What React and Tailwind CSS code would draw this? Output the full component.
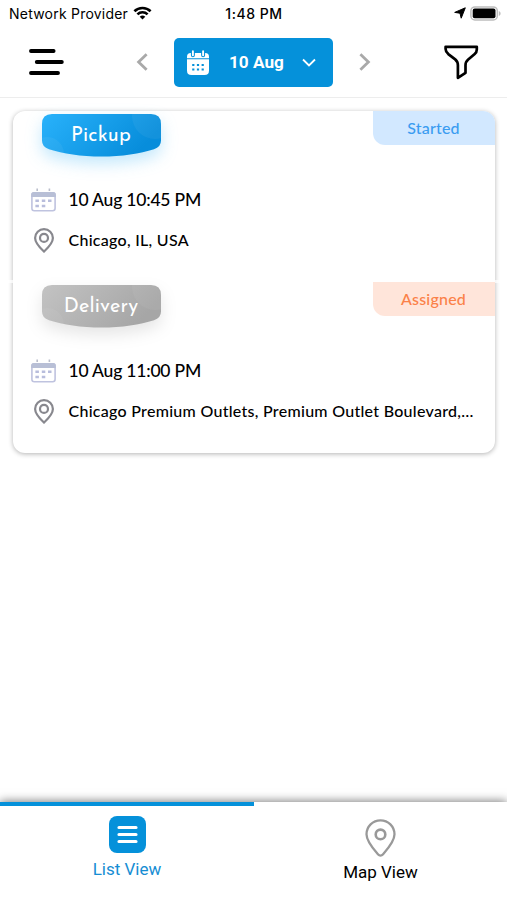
import React, { useState } from 'react';

const WifiIcon = () => (
  <svg className="h-[14px] w-[19px]" viewBox="0 0 19 14" fill="none" stroke="#000" strokeWidth="2.6">
    <path d="M1.4 5.3a11.6 11.6 0 0 1 16.2 0" />
    <path d="M4.4 8.4a7.3 7.3 0 0 1 10.2 0" />
    <path d="M9.5 13.6 6.7 10.8a4 4 0 0 1 5.6 0Z" fill="#000" stroke="none" />
  </svg>
);

const LocationArrowIcon = () => (
  <svg className="h-[12px] w-[12px]" viewBox="0 0 12 12" fill="#000">
    <path d="M11.3.8 7.2 11.2 6 6.2.7 5.4Z" stroke="#000" strokeWidth="1" strokeLinejoin="round" />
  </svg>
);

const BatteryIcon = () => (
  <svg className="h-[15px] w-[31px]" viewBox="0 0 31 15">
    <rect x=".9" y=".9" width="26.4" height="13" rx="4" fill="#fff" stroke="#bdbdbd" strokeWidth="1.5" />
    <rect x="2.7" y="2.6" width="22.8" height="9.7" rx="2" fill="#000" />
    <path d="M28.8 5v5c1.2-.5 1.8-1.4 1.8-2.5S30 5.5 28.8 5Z" fill="#bdbdbd" />
  </svg>
);

const MenuIcon = () => (
  <svg className="h-[26px] w-[35px]" viewBox="0 0 35 26" stroke="#000" strokeWidth="3.9" strokeLinecap="round">
    <path d="M2 2h22.6M7.8 13h25M2 24h27" />
  </svg>
);

const ChevronIcon = ({ flip }) => (
  <svg className={`h-[18px] w-[12px] ${flip ? 'rotate-180' : ''}`} viewBox="0 0 12 18" fill="none" stroke="#a9a9a9" strokeWidth="2.8">
    <path d="m10.6 1.2-8 7.8 8 7.8" />
  </svg>
);

const HeaderCalendarIcon = () => (
  <svg className="h-[26px] w-[24px]" viewBox="0 0 24 26">
    <path d="M1 8.3V6.7Q1 3 4.7 3h14.6Q23 3 23 6.7v1.6Z" fill="#fff" />
    <path d="M1 9.3h22v11.1Q23 25 18.5 25h-13Q1 25 1 20.4Z" fill="#fff" />
    <path d="M6.9 1.3v4M17.1 1.3v4" stroke="#0591da" strokeWidth="4" strokeLinecap="round" />
    <path d="M6.9 1.3v4M17.1 1.3v4" stroke="#fff" strokeWidth="1.9" strokeLinecap="round" />
    <path d="M6.2 15h2.2M10.9 15h2.2M15.6 15h2.2M6.2 19.5h2.2M10.9 19.5h2.2M15.6 19.5h2.2" stroke="#0591da" strokeWidth="2" />
  </svg>
);

const FilterIcon = () => (
  <svg className="h-[35px] w-[35px]" viewBox="0 0 35 35" fill="none" stroke="#000" strokeWidth="2.7" strokeLinejoin="round">
    <path d="M1.6 1.8h31.2v2.8c0 1.8-.7 3.3-2.1 4.5l-6.5 5.4c-1.9 1.6-2.7 3.5-2.7 5.8v7.5l-7.6 5V20.3c0-2.4-.8-4.3-2.7-5.9L4.3 9.1C2.5 7.5 1.6 6 1.6 4Z" />
  </svg>
);

const CalendarIcon = () => (
  <svg className="h-[24px] w-[25px] shrink-0" viewBox="0 0 25 24">
    <rect x=".9" y="4.7" width="23.2" height="18" rx="2.5" fill="#fff" stroke="#bfc3df" strokeWidth="1.6" />
    <path d="M.2 9V6.5Q.2 4 2.8 4h19.4q2.6 0 2.6 2.5V9Z" fill="#b8bfd6" />
    <path d="M6.2.5v2.4M18.4.5v2.4" stroke="#b9bdcb" strokeWidth="1.6" />
    <path d="M4.4 12.7h3.5M10.8 12.7h3.5M17 12.7h3.5M4.4 17.9h3.5M10.8 17.9h3.5" stroke="#b8bddc" strokeWidth="2.5" />
  </svg>
);

const PinIcon = () => (
  <svg className="ml-[3px] mr-[2px] h-[25px] w-[20px] shrink-0" viewBox="0 0 20 25" fill="none" stroke="#88888e" strokeWidth="2.2">
    <path d="M10 23.6C6.8 20.6 1.1 15.3 1.1 10a8.9 8.9 0 0 1 17.8 0c0 5.3-5.7 10.6-8.9 13.6Z" strokeLinejoin="round" />
    <circle cx="10" cy="9.9" r="4" />
  </svg>
);

const MapPinIcon = () => (
  <svg className="h-[38px] w-[31px]" viewBox="0 0 31 38" fill="none" stroke="#999" strokeWidth="2.3">
    <path d="M13.2 35.5C8.5 30.2 1.5 22.7 1.5 15.3a14 14 0 0 1 28 0c0 7.400-7 14.900-11.700 20.200a3 3 0 0 1-4.600 0Z" />
    <circle cx="15.5" cy="15.4" r="4.8" strokeWidth="2.6" />
  </svg>
);

const ribbonPath =
  'M10 0h99q10 0 10 10v16.5q0 6.5-7 8.7C98 39.7 80 42.5 59.5 42.5S21 39.7 7 35.2Q0 33 0 26.5V10Q0 0 10 0Z';

const Ribbon = ({ id, label, from, to, shadow }) => (
  <div className="relative ml-[29px] mt-[3px] h-[43px] w-[119px]">
    <svg className={`absolute inset-0 h-full w-full overflow-visible ${shadow}`} viewBox="0 0 119 43">
      <defs>
        <linearGradient id={id} x1="0" y1="0" x2="1" y2=".35">
          <stop offset="0" stopColor={from} />
          <stop offset="1" stopColor={to} />
        </linearGradient>
        <clipPath id={`${id}-clip`}>
          <path d={ribbonPath} />
        </clipPath>
      </defs>
      <path d={ribbonPath} fill={`url(#${id})`} />
      <g clipPath={`url(#${id}-clip)`} fill="#fff" fillOpacity=".05">
        <circle cx="113" cy="2" r="23" />
        <circle cx="5" cy="40" r="17" />
      </g>
    </svg>
    <span className="relative block pt-[2px] text-center font-['Josefin_Sans',Lato,sans-serif] text-[20px] leading-[41px] tracking-[0.2px] text-white">
      {label}
    </span>
  </div>
);

const stops = [
  {
    id: 'pickup',
    label: 'Pickup',
    from: '#29b2fb',
    to: '#078ddb',
    shadow: 'drop-shadow-[0_7px_8px_rgba(41,171,245,0.28)]',
    status: 'Started',
    statusClass: 'bg-[#d2e8ff] text-[#3a9cf1] rounded-tr-[12px]',
    time: '10 Aug 10:45 PM',
    place: 'Chicago, IL, USA',
  },
  {
    id: 'delivery',
    label: 'Delivery',
    from: '#c3c3c3',
    to: '#a6a6a6',
    shadow: 'drop-shadow-[0_7px_8px_rgba(0,0,0,0.1)]',
    status: 'Assigned',
    statusClass: 'bg-[#ffe5da] text-[#fb8148]',
    time: '10 Aug 11:00 PM',
    place: 'Chicago Premium Outlets, Premium Outlet Boulevard,…',
  },
];

const StopSection = ({ stop }) => (
  <section className="h-[171px]">
    <div className="flex items-start justify-between">
      <Ribbon {...stop} />
      <div
        className={`h-[34px] w-[122px] rounded-bl-[12px] text-center text-[16px] font-medium leading-[33px] tracking-[0.2px] ${stop.statusClass}`}
      >
        {stop.status}
      </div>
    </div>
    <div className="mt-[31px] flex h-[24px] items-center gap-3 pl-[18px]">
      <CalendarIcon />
      <span className="whitespace-nowrap pl-px text-[17.5px] font-medium tracking-[-0.2px]">{stop.time}</span>
    </div>
    <div className="mt-4 flex h-[25px] items-center gap-3 pl-[18px]">
      <PinIcon />
      <span className="whitespace-nowrap pb-[2px] pl-px text-[16px] font-medium tracking-[0.28px]">{stop.place}</span>
    </div>
  </section>
);

const App = () => {
  const [tab, setTab] = useState('list');

  return (
    <div className="flex h-[900px] w-[507px] flex-col overflow-hidden bg-white font-[Lato,sans-serif] text-black">
      {/* Status bar */}
      <div className="grid h-[28px] grid-cols-3 items-center pb-[2px] pl-[9px] pr-[6px] font-[Inter,sans-serif] text-[14px]">
        <div className="flex items-center gap-[5px]">
          <span className="whitespace-nowrap tracking-[0.22px]">Network Provider</span>
          <WifiIcon />
        </div>
        <span className="pr-[2px] text-center font-medium tracking-[0.55px]">1:48 PM</span>
        <div className="flex items-center justify-end gap-1">
          <LocationArrowIcon />
          <BatteryIcon />
        </div>
      </div>

      {/* Header */}
      <header className="flex h-[70px] items-center justify-between border-b border-[#ededed] pl-[29px] pr-[28px]">
        <button className="pb-[2px]"><MenuIcon /></button>
        <div className="flex items-center gap-[26px] pr-px">
          <button className="pb-px"><ChevronIcon /></button>
          <button className="flex h-[49px] w-[159px] items-center rounded-[5px] bg-[#0591da] pl-3 text-white">
            <HeaderCalendarIcon />
            <span className="ml-[19px] font-[Roboto,sans-serif] text-[17.2px] font-bold">10 Aug</span>
            <svg className="ml-[18px] h-[9px] w-[14px]" viewBox="0 0 14 9" fill="none" stroke="#fff" strokeWidth="1.8">
              <path d="m1 1.5 6 6 6-6" />
            </svg>
          </button>
          <button className="pb-px"><ChevronIcon flip /></button>
        </div>
        <button><FilterIcon /></button>
      </header>

      {/* Order card, the side shadow breaks between the two stops */}
      <main className="flex-1 px-[12.5px] pt-[13px]">
        <div className="relative h-[342px] rounded-[12px] bg-white shadow-[0_1px_5px_rgba(0,0,0,0.3)]">
          <div className="absolute -inset-x-[7px] top-[169px] h-[3px] bg-white/70" />
          <div className="relative">
            {stops.map((stop) => (
              <StopSection key={stop.id} stop={stop} />
            ))}
          </div>
        </div>
      </main>

      {/* Bottom tabs */}
      <nav className="flex h-[98px] bg-white font-[Roboto,sans-serif] text-[17px] shadow-[0_-1px_9px_rgba(0,0,0,0.5)]">
        <button
          onClick={() => setTab('list')}
          className={`flex w-[254px] flex-col items-center border-t-4 pt-[10px] text-[#168dd3] ${
            tab === 'list' ? 'border-[#0591da]' : 'border-transparent'
          }`}
        >
          <svg className="h-[37px] w-[37px]" viewBox="0 0 37 37">
            <rect width="37" height="37" rx="8" fill="#0591da" />
            <path d="M10 11.5h17M10 18.5h17M10 25.5h17" stroke="#fff" strokeWidth="3.2" strokeLinecap="round" />
          </svg>
          <span className="mt-[4px] leading-[24px]">List View</span>
        </button>
        <button
          onClick={() => setTab('map')}
          className={`flex flex-1 flex-col items-center border-t-4 pt-[13px] ${
            tab === 'map' ? 'border-[#0591da]' : 'border-transparent'
          }`}
        >
          <MapPinIcon />
          <span className="mt-[3px] leading-[24px]">Map View</span>
        </button>
      </nav>
    </div>
  );
};

export default App;
